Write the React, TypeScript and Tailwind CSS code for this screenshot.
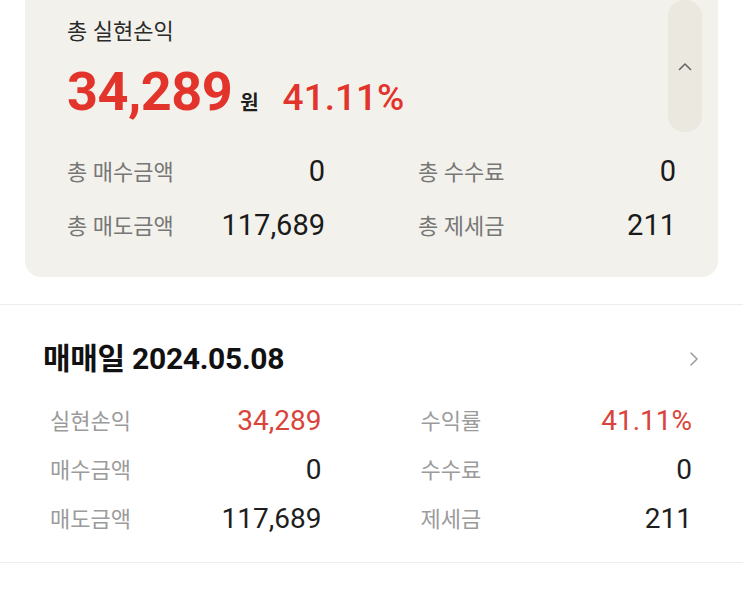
import React from "react";

const font = { fontFamily: "Roboto, 'Noto Sans CJK KR', sans-serif" };

const summaryRows = [
  [
    { label: "총 매수금액", value: "0" },
    { label: "총 수수료", value: "0" },
  ],
  [
    { label: "총 매도금액", value: "117,689" },
    { label: "총 제세금", value: "211" },
  ],
];

const dayRows = [
  { label: "실현손익", value: "34,289", red: true },
  { label: "수익률", value: "41.11%", red: true },
  { label: "매수금액", value: "0" },
  { label: "수수료", value: "0" },
  { label: "매도금액", value: "117,689" },
  { label: "제세금", value: "211" },
];

const App = () => {
  return (
    <main className="w-[743px] h-[590px] bg-white overflow-hidden" style={font}>
      <section className="mx-[25px] bg-[#f3f1ec] rounded-b-2xl pb-[33px]">
        <div className="flex items-start justify-between pl-[42px] pr-[16px]">
          <div className="pt-[18px]">
            <h2 className="text-[22px] leading-[28px] text-[#2b2b2b]">총 실현손익</h2>
            <div className="mt-4 flex items-baseline">
              <span className="text-[54px] leading-[60px] font-bold text-[#e2342b] tracking-[-0.5px]">
                34,289
              </span>
              <span className="ml-[8px] text-[20px] font-bold text-[#1e1e1e]">원</span>
              <span className="ml-[24px] text-[37px] font-medium text-[#e2342b]">41.11%</span>
            </div>
          </div>
          <button className="w-[34px] h-[132px] rounded-2xl bg-[#ebe8e0] flex items-center justify-center">
            <svg width="14" height="9" viewBox="0 0 14 9" fill="none">
              <path d="M1.5 7.5L7 2L12.5 7.5" stroke="#666" strokeWidth="1.6" strokeLinecap="round" strokeLinejoin="round" />
            </svg>
          </button>
        </div>
        <div className="mt-[22px] px-[42px] flex flex-col gap-[18px]">
          {summaryRows.map((row, i) => (
            <div key={i} className="grid grid-cols-2 gap-x-[93px]">
              {row.map((item) => (
                <div key={item.label} className="flex items-center justify-between h-[36px]">
                  <span className="text-[22px] text-[#777]">{item.label}</span>
                  <span className="text-[29px] text-[#1a1a1a]">{item.value}</span>
                </div>
              ))}
            </div>
          ))}
        </div>
      </section>

      <div className="mt-[27px] h-px bg-[#ececec]" />

      <section className="pt-[38px] pb-[25px]">
        <div className="flex items-center justify-between pl-[43px] pr-[44px]">
          <h3 className="text-[30px] leading-[32px] font-bold text-[#111] tracking-[-0.3px]">매매일 2024.05.08</h3>
          <svg width="10" height="16" viewBox="0 0 10 16" fill="none">
            <path d="M2 2L8 8L2 14" stroke="#9a9a9a" strokeWidth="1.5" strokeLinecap="round" strokeLinejoin="round" />
          </svg>
        </div>
        <div className="mt-[28px] pl-[50px] pr-[51px] grid grid-cols-2 gap-x-[99px] gap-y-[13px]">
          {dayRows.map((item) => (
            <div key={item.label} className="flex items-center justify-between h-[36px]">
              <span className="text-[22px] text-[#9b9b9b]">{item.label}</span>
              <span className={item.red ? "text-[28px] text-[#d9443a]" : "text-[28px] text-[#1e1e1e]"}>
                {item.value}
              </span>
            </div>
          ))}
        </div>
      </section>

      <div className="h-px bg-[#ececec]" />
    </main>
  );
};

export default App;
